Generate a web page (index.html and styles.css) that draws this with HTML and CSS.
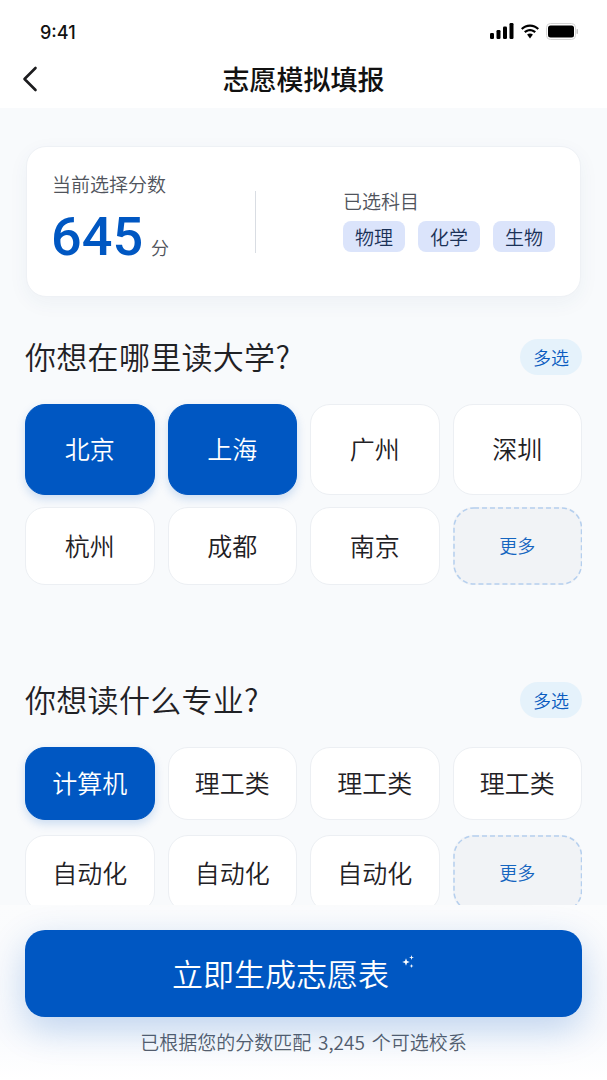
FILE: index.html
```html
<!DOCTYPE html>
<html lang="zh-CN">
<head>
    <meta charset="UTF-8">
    <meta name="viewport" content="width=device-width, initial-scale=1.0">
    <title>志愿模拟填报</title>
    <link rel="stylesheet" href="styles.css">
</head>
<body>
    <div class="screen">
        <header class="top">
            <div class="status">
                <span class="time">9:41</span>
                <div class="status-icons">
                    <svg width="24" height="16" viewBox="0 0 24 16"><rect x="0" y="10" width="4" height="6" rx="1.2"/><rect x="6.5" y="7" width="4" height="9" rx="1.2"/><rect x="13" y="3.5" width="4" height="12.500" rx="1.2"/><rect x="19.500" y="0" width="4" height="16" rx="1.2"/></svg>
                    <svg width="20" height="15" viewBox="0 0 20 15"><path d="M10 2.800c2.900 0 5.500 1.100 7.500 3l1.500-1.600C16.600 1.900 13.500.5 10 .5S3.400 1.900 1 4.200l1.500 1.600c2-1.900 4.600-3 7.500-3z"/><path d="M10 7.200c1.700 0 3.200.6 4.400 1.700L16 7.300C14.400 5.800 12.300 4.900 10 4.900s-4.400.9-6 2.400l1.600 1.600C6.800 7.800 8.300 7.200 10 7.200z"/><path d="M10 9.400c-1.100 0-2.100.4-2.900 1.100L10 14.500l2.900-4c-.8-.7-1.800-1.100-2.900-1.100z"/></svg>
                    <svg width="32" height="17" viewBox="0 0 32 17"><rect x=".5" y=".5" width="29" height="16" rx="4" fill="none" stroke="#d4d4d4"/><rect x="2" y="2.500" width="26" height="12" rx="2.500"/><rect x="30.500" y="6" width="1.500" height="5" rx=".7" fill="#c4c4c4"/></svg>
                </div>
            </div>
            <nav class="nav">
                <svg class="back" width="16" height="26" viewBox="0 0 16 26"><path d="M13.500 2 2.500 13l11 11" fill="none" stroke="#1c1c1e" stroke-width="2.600" stroke-linecap="round" stroke-linejoin="round"/></svg>
                <h1>志愿模拟填报</h1>
            </nav>
        </header>

        <main class="content">
            <section class="score-card">
                <div class="score-left">
                    <div class="card-label">当前选择分数</div>
                    <div class="score-line"><span class="score">645</span><span class="unit">分</span></div>
                </div>
                <div class="divider"></div>
                <div class="score-right">
                    <div class="card-label">已选科目</div>
                    <div class="tags">
                        <span class="tag">物理</span>
                        <span class="tag">化学</span>
                        <span class="tag">生物</span>
                    </div>
                </div>
            </section>

            <div class="section-head">
                <h2>你想在哪里读大学?</h2>
                <span class="pill">多选</span>
            </div>
            <div class="tiles tiles-city">
                <div class="tile on">北京</div>
                <div class="tile on">上海</div>
                <div class="tile">广州</div>
                <div class="tile">深圳</div>
                <div class="tile">杭州</div>
                <div class="tile">成都</div>
                <div class="tile">南京</div>
                <div class="tile more">更多<svg class="dash"><rect x="1" y="1" rx="20"/></svg></div>
            </div>

            <div class="section-head second">
                <h2>你想读什么专业?</h2>
                <span class="pill">多选</span>
            </div>
            <div class="tiles tiles-major">
                <div class="tile on">计算机</div>
                <div class="tile">理工类</div>
                <div class="tile">理工类</div>
                <div class="tile">理工类</div>
                <div class="tile">自动化</div>
                <div class="tile">自动化</div>
                <div class="tile">自动化</div>
                <div class="tile more">更多<svg class="dash"><rect x="1" y="1" rx="20"/></svg></div>
            </div>
        </main>

        <footer class="bottom">
            <button class="generate" type="button">
                <span>立即生成志愿表</span>
                <svg class="sparkle" width="14" height="14" viewBox="0 0 14 14" fill="#fff"><path d="M5 3.200 6 6l2.800 1L6 8 5 10.800 4 8 1.200 7 4 6z"/><path d="M10.500 0l.6 1.900 1.900.6-1.900.6-.6 1.900-.6-1.900L8 2.500l1.900-.6z"/><path d="M10.500 9l.5 1.500 1.500.5-1.500.5-.5 1.500-.5-1.500L8.500 11l1.500-.5z"/></svg>
            </button>
            <p class="note">已根据您的分数匹配 3,245 个可选校系</p>
        </footer>
    </div>
</body>
</html>
```

FILE: styles.css
```css
* {
    box-sizing: border-box;
}
body {
    margin: 0;
    font-family: "Noto Sans CJK SC", "Noto Sans", sans-serif;
    font-weight: 350;
    color: #26282c;
}
.screen {
    position: relative;
    width: 607px;
    height: 1080px;
    overflow: hidden;
    background-color: #f8fafc;
}

/* top bars */
.top {
    background-color: white;
    height: 108px;
}
.status {
    display: flex;
    justify-content: space-between;
    align-items: center;
    height: 62px;
    padding: 2px 29px 0 40px;
}
.time {
    font-family: Inter, sans-serif;
    font-size: 18px;
    font-weight: 500;
    color: #111;
}
.status-icons {
    display: flex;
    align-items: center;
    gap: 6px;
    margin-top: -2px;
}
.nav {
    position: relative;
    height: 34px;
    display: flex;
    justify-content: center;
    align-items: flex-start;
}
.back {
    position: absolute;
    left: 22px;
    top: 4px;
}
.nav h1 {
    margin: 0;
    font-size: 27px;
    font-weight: 500;
    color: #111;
    line-height: 34px;
}

/* main */
.content {
    padding: 38px 25px 0;
}
.score-card {
    display: flex;
    align-items: center;
    height: 151px;
    margin: 0 1px;
    padding: 0 25px;
    background-color: white;
    border: 1px solid #eef1f5;
    border-radius: 20px;
    box-shadow: 0 6px 20px rgba(40, 70, 120, 0.05);
}
.score-left {
    width: 204px;
    margin-top: -5px;
}
.card-label {
    font-size: 19px;
    line-height: 26px;
    color: #50545c;
}
.score-line {
    display: flex;
    align-items: baseline;
    margin-top: 10px;
}
.score {
    font-family: Roboto, sans-serif;
    font-size: 54px;
    font-weight: 500;
    line-height: 60px;
    margin-left: -1px;
    color: #0057c2;
}
.unit {
    margin-left: 8px;
    font-size: 18px;
    color: #50545c;
}
.divider {
    width: 1px;
    height: 62px;
    margin-left: 1px;
    background-color: #d9dde3;
}
.score-right {
    margin-left: 87px;
    margin-top: -4px;
}
.tags {
    display: flex;
    gap: 13px;
    margin-top: 7px;
}
.tag {
    width: 62px;
    height: 31px;
    display: flex;
    justify-content: center;
    align-items: center;
    font-size: 19px;
    color: #1a3157;
    background-color: #dbe4fb;
    border-radius: 8px;
}

.section-head {
    display: flex;
    justify-content: space-between;
    align-items: center;
    height: 36px;
    margin-top: 42px;
}
.section-head.second {
    margin-top: 97px;
}
.section-head h2 {
    margin: 0;
    padding-bottom: 3px;
    font-size: 31px;
    font-weight: 350;
    letter-spacing: 0.3px;
    color: #1f2125;
}
.pill {
    width: 62px;
    height: 36px;
    padding-bottom: 1px;
    display: flex;
    justify-content: center;
    align-items: center;
    font-size: 18px;
    color: #0a5cc0;
    background-color: #e5f2fb;
    border-radius: 18px;
}

.tiles {
    display: grid;
    grid-template-columns: repeat(4, 1fr);
    column-gap: 13px;
}
.tiles-city {
    grid-template-rows: 91px 78px;
    row-gap: 12px;
    margin-top: 29px;
}
.tiles-major {
    grid-template-rows: 73px 77px;
    row-gap: 15px;
    margin-top: 29px;
}
.tile {
    position: relative;
    display: flex;
    justify-content: center;
    align-items: center;
    padding-bottom: 3px;
    font-size: 25px;
    color: #1f2125;
    background-color: white;
    border: 1px solid #eceff3;
    border-radius: 20px;
}
.tile.on {
    color: white;
    background-color: #0057c2;
    border-color: #0057c2;
    box-shadow: 0 4px 10px rgba(0, 87, 194, 0.18);
}
.tile.more {
    font-size: 18px;
    color: #1565c0;
    background-color: #f1f3f6;
    border: none;
}
.dash {
    position: absolute;
    top: 0;
    left: 0;
    width: 100%;
    height: 100%;
}
.dash rect {
    width: calc(100% - 2px);
    height: calc(100% - 2px);
    fill: none;
    stroke: #b5cfee;
    stroke-width: 1.5;
    stroke-dasharray: 5 3;
}

/* bottom action panel, sits over the list */
.bottom {
    position: absolute;
    left: 0;
    right: 0;
    bottom: 0;
    height: 175px;
    padding: 25px 25px 0;
    background: linear-gradient(#fbfcfd, #f8fafd 70%, white);
}
.generate {
    position: relative;
    display: block;
    width: 100%;
    height: 87px;
    padding: 0 0 3px;
    font-family: inherit;
    font-weight: 350;
    font-size: 31px;
    color: white;
    background-color: #0057c2;
    border: none;
    border-radius: 20px;
    box-shadow: 0 12px 36px rgba(0, 87, 194, 0.24);
}
.generate span {
    position: relative;
    left: -23px;
}
.sparkle {
    position: absolute;
    left: 376px;
    top: 25px;
}
.note {
    margin: 12px 0 0;
    text-align: center;
    font-size: 19px;
    word-spacing: 2.500px;
    line-height: 26px;
    color: #565e6b;
}
```
